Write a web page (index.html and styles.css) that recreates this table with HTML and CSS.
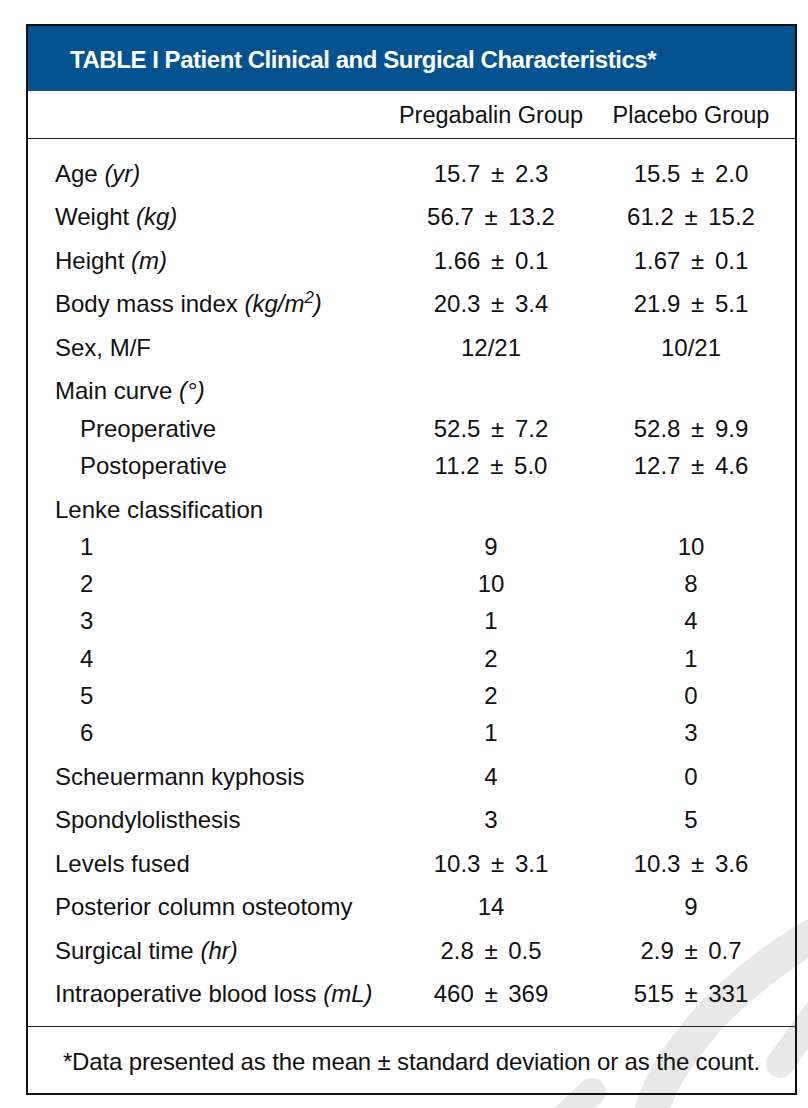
FILE: index.html
```html
<!DOCTYPE html>
<html lang="en">
<head>
<meta charset="utf-8">
<title>Table I</title>
<link rel="stylesheet" href="styles.css">
</head>
<body>
<div class="page">
  <svg class="watermark" width="260" height="240" viewBox="0 0 260 240" aria-hidden="true">
    <path class="w-main" d="M285 57 C 235 82, 185 122, 155 157 C 128 190, 110 215, 100 255" />
    <path class="w-side" d="M268 146 L 232 196" />
    <path class="w-side" d="M44 224 L 14 252" />
  </svg>
  <div class="table">
    <div class="title">TABLE I Patient Clinical and Surgical Characteristics*</div>
    <div class="grid head">
      <div></div>
      <div class="hval">Pregabalin Group</div>
      <div class="hval">Placebo Group</div>
    </div>
    <div class="body">
      <div class="grid row"><div class="lbl">Age <i>(yr)</i></div><div class="val">15.7 ± 2.3</div><div class="val">15.5 ± 2.0</div></div>
      <div class="grid row"><div class="lbl">Weight <i>(kg)</i></div><div class="val">56.7 ± 13.2</div><div class="val">61.2 ± 15.2</div></div>
      <div class="grid row"><div class="lbl">Height <i>(m)</i></div><div class="val">1.66 ± 0.1</div><div class="val">1.67 ± 0.1</div></div>
      <div class="grid row"><div class="lbl">Body mass index <i>(kg/m<sup>2</sup>)</i></div><div class="val">20.3 ± 3.4</div><div class="val">21.9 ± 5.1</div></div>
      <div class="grid row"><div class="lbl">Sex, M/F</div><div class="val">12/21</div><div class="val">10/21</div></div>
      <div class="grid row"><div class="lbl">Main curve <i>(°)</i></div><div></div><div></div></div>
      <div class="grid row sub"><div class="lbl">Preoperative</div><div class="val">52.5 ± 7.2</div><div class="val">52.8 ± 9.9</div></div>
      <div class="grid row sub"><div class="lbl">Postoperative</div><div class="val">11.2 ± 5.0</div><div class="val">12.7 ± 4.6</div></div>
      <div class="grid row"><div class="lbl">Lenke classification</div><div></div><div></div></div>
      <div class="grid row sub"><div class="lbl">1</div><div class="val">9</div><div class="val">10</div></div>
      <div class="grid row sub"><div class="lbl">2</div><div class="val">10</div><div class="val">8</div></div>
      <div class="grid row sub"><div class="lbl">3</div><div class="val">1</div><div class="val">4</div></div>
      <div class="grid row sub"><div class="lbl">4</div><div class="val">2</div><div class="val">1</div></div>
      <div class="grid row sub"><div class="lbl">5</div><div class="val">2</div><div class="val">0</div></div>
      <div class="grid row sub"><div class="lbl">6</div><div class="val">1</div><div class="val">3</div></div>
      <div class="grid row"><div class="lbl">Scheuermann kyphosis</div><div class="val">4</div><div class="val">0</div></div>
      <div class="grid row"><div class="lbl">Spondylolisthesis</div><div class="val">3</div><div class="val">5</div></div>
      <div class="grid row"><div class="lbl">Levels fused</div><div class="val">10.3 ± 3.1</div><div class="val">10.3 ± 3.6</div></div>
      <div class="grid row"><div class="lbl">Posterior column osteotomy</div><div class="val">14</div><div class="val">9</div></div>
      <div class="grid row"><div class="lbl">Surgical time <i>(hr)</i></div><div class="val">2.8 ± 0.5</div><div class="val">2.9 ± 0.7</div></div>
      <div class="grid row"><div class="lbl">Intraoperative blood loss <i>(mL)</i></div><div class="val">460 ± 369</div><div class="val">515 ± 331</div></div>
    </div>
    <div class="foot">*Data presented as the mean ± standard deviation or as the count.</div>
  </div>
</div>
</body>
</html>
```
FILE: styles.css
```css
html, body {
  margin: 0;
  padding: 0;
  background: #fff;
}
body {
  font-family: "Liberation Sans", Arial, sans-serif;
  color: #111;
}
.page {
  position: relative;
  width: 808px;
  height: 1108px;
  padding: 24px 0 0 26px;
  box-sizing: border-box;
  overflow: hidden;
}
.watermark {
  position: absolute;
  right: 0;
  bottom: 0;
  z-index: 0;
}
.watermark path {
  fill: none;
  stroke: #e8e8e8;
  stroke-linecap: round;
}
.w-main {
  stroke-width: 34;
}
.w-side {
  stroke-width: 28;
}
.table {
  position: relative;
  z-index: 1;
  width: 771px;
  height: 1071px;
  box-sizing: border-box;
  border: 2px solid #111;
  display: flex;
  flex-direction: column;
}
.title {
  height: 65px;
  background: #04528f;
  color: #fff;
  font-family: "Liberation Sans", Arial, sans-serif;
  font-weight: bold;
  font-size: 24px;
  letter-spacing: -0.45px;
  display: flex;
  align-items: center;
  padding-left: 42px;
  padding-top: 2px;
  box-sizing: border-box;
}
.grid {
  display: grid;
  grid-template-columns: 363px 200px 200px;
}
.head {
  height: 48px;
  align-items: center;
  border-bottom: 1px solid #222;
  font-size: 23.5px;
  padding-top: 2px;
  box-sizing: border-box;
}
.hval {
  text-align: center;
  white-space: nowrap;
}
.body {
  padding-top: 16px;
  padding-bottom: 14px;
  border-bottom: 1.5px solid #222;
}
.row {
  font-size: 24px;
  line-height: 37.3px;
  margin-top: 6.2px;
}
.row:first-child {
  margin-top: 0;
}
.row.sub {
  margin-top: 0;
}
.lbl {
  padding-left: 27px;
  white-space: nowrap;
}
.sub .lbl {
  padding-left: 52px;
}
.val {
  text-align: center;
  word-spacing: 4px;
  white-space: nowrap;
}
.lbl i {
  font-style: italic;
}
sup {
  font-size: 0.7em;
  line-height: 0;
  vertical-align: 0.55em;
}
.foot {
  flex: 1;
  display: flex;
  align-items: center;
  justify-content: center;
  font-size: 24px;
  letter-spacing: -0.15px;
  padding-top: 4px;
}
```
